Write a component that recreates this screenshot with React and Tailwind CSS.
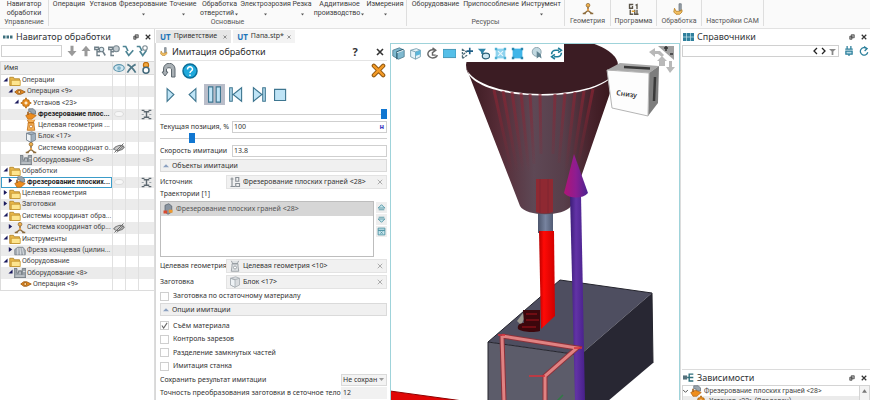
import React from "react";

const TEAL = "#2b7f9b";

function Svg({ w = 12, h, box = "0 0 16 16", children, className = "" }) {
  return (
    <svg width={w} height={h || w} viewBox={box} fill="none" className={`shrink-0 ${className}`} aria-hidden="true">
      {children}
    </svg>
  );
}

/* ---------- tree icons ---------- */
const Folder = () => (
  <Svg w={12}>
    <path d="M1 14V3h5l1 2h7v9z" fill="#e9b84a" stroke="#a87a1c" />
    <path d="M3 14V7h12v7z" fill="#fde58f" stroke="#c2922b" />
  </Svg>
);
const Op = () => (
  <Svg w={12}>
    <path d="M1 8l4-3h4l6 3-6 3H5z" fill="#e58a1f" stroke="#8c4d0c" />
    <circle cx="7" cy="8" r="2" fill="#ffd9a0" stroke="#8c4d0c" />
  </Svg>
);
const Setup = () => (
  <Svg w={12}>
    <path d="M8 1l2 3h2v2l3 2-3 2v2h-2l-2 3-2-3H4v-2L1 8l3-2V4h2z" fill="#e58a1f" stroke="#a8630f" />
    <path d="M8 6v4M6 8h4" stroke="#fff0d0" strokeWidth="2" />
  </Svg>
);
const Mill = () => (
  <Svg w={12}>
    <path d="M5 1h6l3 3v4H8V5H5z" fill="#9aa5ae" stroke="#65717b" />
    <path d="M1 10l6-3 8 3-6 5H4z" fill="#ee8d1d" stroke="#b3681a" />
    <path d="M4 5v4" stroke="#9a520b" strokeWidth="2" />
  </Svg>
);
const Target = ({ grey }) => (
  <Svg w={12}>
    <path d="M3 1l2 4h6l2-4M4 5h8v3l1 7H3l1-7z" fill={grey ? "#dfe2e4" : "#f6b35a"} stroke={grey ? "#8a9096" : "#b9660d"} />
    <circle cx="8" cy="10" r="2" fill="#fff" stroke={grey ? "#8a9096" : "#b9660d"} />
  </Svg>
);
const Block = ({ light }) => (
  <Svg w={12}>
    <path d="M2 3l7-2 5 2v9l-6 3-6-3z" fill={light ? "#d9dcdf" : "#9fb0bf"} stroke={light ? "#a1a8ae" : "#75828e"} />
    <path d="M2 3l6 2v10l-6-3z" fill="#eef2f5" stroke={light ? "#a1a8ae" : "#75828e"} />
    <path d="M2 3l6 2 6-2" stroke={light ? "#a1a8ae" : "#75828e"} />
  </Svg>
);
const Csys = () => (
  <Svg w={12}>
    <path d="M8 4v6M8 10l-5 4M8 10l5 4" stroke="#8b6a3a" strokeWidth="2" />
    <path d="M1 14h4M11 14h4" stroke="#8b6a3a" strokeWidth="2" />
    <circle cx="8" cy="3" r="2.500" fill="#f0b04c" stroke="#8b6a3a" />
    <circle cx="8" cy="9" r="1.500" fill="#f0a64c" />
  </Svg>
);
const Equip = () => (
  <Svg w={12}>
    <path d="M0 2h4v6h2V5h4v5h1V2h5v12H0z" fill="#9ba2a9" stroke="#6a727a" />
    <path d="M2 12h12M12 6h3M7 8h2" stroke="#e9ecee" />
  </Svg>
);
const Cutter = () => (
  <Svg w={12}>
    <path d="M1 13V6l4-3h7l3 4v6z" fill="#a6adb4" stroke="#737c84" />
    <path d="M5 4v9M8 4l1 9M11 4l2 9" stroke="#e8ebee" />
  </Svg>
);
const HiddenEye = () => (
  <Svg w={12} className="mx-auto">
    <path d="M1 9c3-5 11-6 14-2-3 5-11 6-14 2z" stroke="#7d7d7d" strokeWidth="1.5" fill="#c9c9c9" />
    <path d="M2 14L14 2M5 14l9-9" stroke="#6a6a6a" strokeWidth="1.3" />
  </Svg>
);
const FaintEye = () => (
  <Svg w={10} className="mx-auto">
    <ellipse cx="8" cy="8" rx="7" ry="4" stroke="#cfcfcf" fill="#f7f7f7" />
  </Svg>
);
const Beam = () => (
  <Svg w={11} className="mx-auto">
    <path d="M1 2h4M11 2h4M4 4h8M1 14h4M11 14h4M4 12h8M8 4v8" stroke="#5d6870" strokeWidth="2" />
    <path d="M1 8h3M12 8h3" stroke="#9aa3a9" strokeWidth="1.500" />
  </Svg>
);

const rows = [
  [0, "d", Folder, "Операции"],
  [1, "d", Op, "Операция <9>"],
  [2, "d", Setup, "Установ <23>"],
  [3, "", Mill, "Фрезерование плос...", "faint", true],
  [3, "", Target, "Целевая геометрия ..."],
  [3, "", Block, "Блок <17>"],
  [3, "", Csys, "Система координат о...", "hidden"],
  [2, "", Equip, "Оборудование <8>"],
  [0, "d", Folder, "Обработки"],
  [1, "r", Mill, "Фрезерование плоских...", "faint", true, true],
  [0, "r", Folder, "Целевая геометрия"],
  [0, "r", Folder, "Заготовки"],
  [0, "d", Folder, "Системы координат обра..."],
  [1, "r", Csys, "Система координат обр...", "hidden"],
  [0, "d", Folder, "Инструменты"],
  [1, "r", Cutter, "Фреза концевая (цилин..."],
  [0, "d", Folder, "Оборудование"],
  [1, "d", Equip, "Оборудование <8>"],
  [2, "", Op, "Операция <9>"],
];
const indents = ["pl-[2px]", "pl-[7px]", "pl-[13px]", "pl-[18px]"];

function Arrow({ kind }) {
  return (
    <Svg w={5} box="0 0 6 6" className="mb-[3px]">
      {kind === "d" && <path d="M5.500 .5v5h-5z" fill="#1a1a5e" />}
      {kind === "r" && <path d="M1 0l4 3-4 3z" fill="#1a1a5e" />}
    </Svg>
  );
}

function PanelButtons() {
  return (
    <div className="ml-auto flex items-center gap-[6px] pr-[3px]">
      <button aria-label="Открепить" className="flex">
        <Svg w={6} box="0 0 8 8"><path d="M3 1h4v4H3zM1 3h3v4H1z" stroke="#444" fill="#aaa" /></Svg>
      </button>
      <button aria-label="Закрыть" className="flex">
        <Svg w={6} box="0 0 8 8"><path d="M1 1l6 6M7 1L1 7" stroke="#333" strokeWidth="1.6" /></Svg>
      </button>
    </div>
  );
}

/* ---------- ribbon ---------- */
function RibbonItem({ label, second, caret, w }) {
  return (
    <button className={`flex flex-col items-center text-center whitespace-nowrap ${w}`}>
      <span>{label}</span>
      <span className="flex items-end justify-center">
        {second}
        {caret && <Svg w={5} h={3} box="0 0 5 3" className="mt-[4px] mb-[2px]"><path d="M1 .5h3L2.500 2.500z" fill="#555" /></Svg>}
      </span>
    </button>
  );
}

function RibbonGroup({ title, w, children }) {
  return (
    <section className={`flex shrink-0 flex-col justify-between border-r border-[#dedede] ${w}`}>
      <div className="flex justify-center">{children}</div>
      <div className="text-center whitespace-nowrap text-[#555]">{title}</div>
    </section>
  );
}

function Ribbon() {
  return (
    <header className="flex h-[29px] shrink-0 overflow-hidden border-b border-[#e2e2e2] bg-[#fafafa] pb-[2px] font-[Roboto,sans-serif] text-[7px] leading-[9px] text-[#3c3c3c]">
      <RibbonGroup title="Управление" w="w-[49px]">
        <RibbonItem label="Навигатор" second="обработки" w="w-[48px]" />
      </RibbonGroup>
      <RibbonGroup title="Основные" w="w-[358px]">
        <RibbonItem label="Операция" w="w-[36px]" />
        <RibbonItem label="Установ" w="w-[32px]" />
        <RibbonItem label="Фрезерование" caret w="w-[48px]" />
        <RibbonItem label="Точение" caret w="w-[32px]" />
        <RibbonItem label="Обработка" second="отверстий" caret w="w-[41px]" />
        <RibbonItem label="Электроэрозия" caret w="w-[51px]" />
        <RibbonItem label="Резка" caret w="w-[22px]" />
        <RibbonItem label="Аддитивное" second="производство" caret w="w-[53px]" />
        <RibbonItem label="Измерения" caret w="w-[38px]" />
      </RibbonGroup>
      <RibbonGroup title="Ресурсы" w="w-[158px]">
        <RibbonItem label="Оборудование" w="w-[53px]" />
        <RibbonItem label="Приспособление" w="w-[58px]" />
        <RibbonItem label="Инструмент" caret w="w-[42px]" />
      </RibbonGroup>
      <RibbonGroup title="Геометрия" w="w-[46px]">
        <button aria-label="Геометрия" className="pt-[3px]"><Csys /></button>
      </RibbonGroup>
      <RibbonGroup title="Программа" w="w-[46px]">
        <button aria-label="Программа" className="pt-[3px]">
          <Svg w={12}>
            <path d="M7 2H2v5h4V4M10 3l2-1v6M3 9v6h4M9 9v6h5M12 9v6" stroke="#5c5548" strokeWidth="1.8" />
            <path d="M5 11h4" stroke="#e0a030" strokeWidth="2" />
          </Svg>
        </button>
      </RibbonGroup>
      <RibbonGroup title="Обработка" w="w-[45px]">
        <button aria-label="Обработка" className="pt-[3px]"><ToolIcon w={12} /></button>
      </RibbonGroup>
      <RibbonGroup title="Настройки CAM" w="w-[62px]">
        <span />
      </RibbonGroup>
    </header>
  );
}

function ToolIcon({ w }) {
  return (
    <Svg w={w}>
      <path d="M8 1h3v9H8z" fill="#9aa3aa" stroke="#6a747c" />
      <path d="M2 7l2 4h5l3-2v3l-3 3H4l-3-3z" fill="#f3c064" stroke="#b27a1c" />
    </Svg>
  );
}

/* ---------- left navigator ---------- */
function Navigator() {
  const tools = [
    <path key="a" d="M6 1h4v7h4l-6 7-6-7h4z" fill="#9a9a9a" />,
    <path key="b" d="M6 15h4V8h4L8 1 2 8h4z" fill="#9a9a9a" />,
    <g key="c"><path d="M1 3h5v3H1zM4 6v8h4M4 9h4" stroke="#6f7f88" strokeWidth="1.8" /><circle cx="10" cy="6" r="3" fill="#dbe9ef" stroke="#6f7f88" strokeWidth="1.5" /><path d="M12 9l3 5" stroke="#6f7f88" strokeWidth="2" /></g>,
    <g key="d"><path d="M1 3h5v3H1zM4 6v8h4M4 9h4" stroke="#6f7f88" strokeWidth="1.8" /><circle cx="11" cy="5" r="4" fill="#c5cdd2" stroke="#7b8a92" strokeWidth="1.5" /></g>,
    <path key="e" d="M1 2h4l3 6M5 8l4 6 6-7" stroke="#4d8494" strokeWidth="2.200" />,
    <g key="f"><path d="M1 2h4l3 6M5 8l4 6 5-7" stroke="#4d8494" strokeWidth="2.200" /><circle cx="12" cy="4" r="3" stroke="#7b8a92" strokeWidth="1.5" /></g>,
  ];
  const names = ["Вниз", "Вверх", "Найти", "Настройка", "Принять", "Проверить"];
  return (
    <aside className="flex w-[155px] shrink-0 flex-col border-r border-[#dcdcdc]">
      <div className="flex h-[15px] items-center gap-[3px] pl-[3px]">
        <Svg w={10} h={6} box="0 0 20 10"><path d="M0 2h5v6H0zM7 2h5v6H7zM14 2h5v6h-5z" fill="#3d6f7d" /></Svg>
        <h2 className="text-[9px] leading-[12px] text-[#2f3337]">Навигатор обработки</h2>
        <PanelButtons />
      </div>
      <div className="flex h-[14px] items-center gap-[2px] pl-[1px]">
        <input aria-label="Поиск" className="mr-[2px] h-[12px] w-[61px] border border-[#d0d0d0] bg-white" />
        {tools.map((t, i) => (
          <button key={names[i]} aria-label={names[i]} className="flex"><Svg w={12}>{t}</Svg></button>
        ))}
      </div>
      <table className="mt-[3px] h-[229px] w-full table-fixed border-collapse border-l border-[#dcdcdc] font-[Roboto,sans-serif] text-[7px] leading-[9px] text-[#454545]">
        <colgroup>
          <col />
          <col className="w-[13px]" />
          <col className="w-[13px]" />
          <col className="w-[16px]" />
        </colgroup>
        <thead>
          <tr className="h-[13px] border-y border-[#d9d9d9] bg-[#efefef]">
            <th className="p-0 pl-[3px] text-left font-normal">Имя</th>
            <th aria-label="Видимость" className="border-l border-[#dcdcdc] p-0">
              <Svg w={12} className="mx-auto"><ellipse cx="8" cy="8" rx="7" ry="4.500" fill="#cfe6f1" stroke="#5a93aa" strokeWidth="1.5" /><circle cx="8" cy="8" r="2.500" fill="#7db3ca" /></Svg>
            </th>
            <th aria-label="Подавление" className="border-l border-[#dcdcdc] p-0">
              <Svg w={11} className="mx-auto"><path d="M2 2c6 3 9 7 12 12M14 2C8 5 5 9 2 14" stroke="#4f7888" strokeWidth="2.500" /></Svg>
            </th>
            <th aria-label="Состояние" className="border-l border-[#dcdcdc] p-0">
              <Svg w={12} className="mx-auto"><circle cx="8" cy="4" r="3.500" fill="#f5a93e" stroke="#c06d0a" strokeWidth="1.500" /><circle cx="8" cy="11" r="4" fill="#fff" stroke="#42687a" strokeWidth="2" /></Svg>
            </th>
          </tr>
        </thead>
        <tbody>
          {rows.map(([lvl, arrow, Icon, text, eye, beam, sel], i) => (
            <tr key={i} className={i % 2 ? "bg-[#ebebeb]" : "bg-white"}>
              <td className="p-0 whitespace-nowrap">
                <div className={`flex h-[11px] items-center gap-[1px] ${indents[lvl]} ${beam ? "font-bold text-[#222]" : ""} ${sel ? "bg-white shadow-[inset_0_0_0_1px_#3b9cc9]" : ""}`}>
                  <Arrow kind={arrow} />
                  <Icon />
                  <span>{text}</span>
                </div>
              </td>
              <td className="border-l border-[#e0e0e0] p-0">
                {eye === "hidden" && <HiddenEye />}
                {eye === "faint" && <FaintEye />}
              </td>
              <td className="border-l border-[#e0e0e0] p-0" />
              <td className="border-l border-[#e0e0e0] p-0">{beam && <Beam />}</td>
            </tr>
          ))}
        </tbody>
      </table>
      <div className="flex-1 border-t border-[#dcdcdc]" />
    </aside>
  );
}

/* ---------- simulation dialog ---------- */
const play = [
  ["Воспроизвести", <path key="p" d="M6 3l8 7-8 8z" />],
  ["Назад", <path key="p" d="M14 3l-8 7 8 8z" />],
  ["Пауза", <path key="p" d="M3 1h5v18H3zM12 1h5v18h-5z" />],
  ["В начало", <path key="p" d="M2 2h3v16H2zM16 2v16L6 10z" />],
  ["В конец", <path key="p" d="M15 2h3v16h-3zM4 2v16l10-8z" />],
  ["Стоп", <path key="p" d="M3 4h13v13H3z" />],
];

function Slider({ label, value }) {
  return (
    <input
      type="range"
      aria-label={label}
      defaultValue={value}
      className="block h-[10px] w-full shrink-0 appearance-none bg-transparent [&::-webkit-slider-runnable-track]:h-[1px] [&::-webkit-slider-runnable-track]:bg-[#cfcfcf] [&::-webkit-slider-thumb]:-mt-[5px] [&::-webkit-slider-thumb]:h-[10px] [&::-webkit-slider-thumb]:w-[6px] [&::-webkit-slider-thumb]:appearance-none [&::-webkit-slider-thumb]:bg-[#1177d1]"
    />
  );
}

function Section({ title }) {
  return (
    <h3 className="shrink-0">
      <button type="button" className="flex h-[13px] w-full items-center gap-[3px] border border-[#dadada] bg-[#f0f0f0] pl-[2px]">
        <Svg w={6} h={4} box="0 0 8 5"><path d="M4 0l4 4H0z" fill="#8aa0c0" /></Svg>
        {title}
      </button>
    </h3>
  );
}

function RefField({ id, label, icon, value }) {
  return (
    <div className="flex h-[14px] shrink-0 items-center">
      <label htmlFor={id} className="w-[66px] whitespace-nowrap">{label}</label>
      <div className="flex h-[14px] flex-1 items-center gap-[2px] border border-[#e3e3e3] bg-[#f1f1f1] pr-[3px] pl-[2px]">
        {icon}
        <input id={id} defaultValue={value} className="w-0 min-w-0 flex-1 bg-transparent" />
        <button type="button" aria-label="Очистить" className="flex">
          <Svg w={6} box="0 0 8 8"><path d="M1 1l6 6M7 1L1 7" stroke="#aaa" strokeWidth="1.300" /></Svg>
        </button>
      </div>
    </div>
  );
}

function Check({ label, on }) {
  return (
    <label className="flex flex-1 items-center gap-[4px]">
      <input type="checkbox" defaultChecked={on} className="peer sr-only" />
      <span className="flex size-[9px] items-center justify-center border border-[#cfcfcf] bg-white">
        {on && <Svg w={7} box="0 0 8 8"><path d="M1 4l2 3 4-6" stroke="#666" strokeWidth="1.200" /></Svg>}
      </span>
      {label}
    </label>
  );
}

function NumField({ id, label, value, children }) {
  return (
    <div className="flex h-[12px] items-center">
      <label htmlFor={id} className="w-[72px] whitespace-nowrap">{label}</label>
      <div className="flex h-[12px] flex-1 items-center border border-[#cfcfcf] pr-[2px] pl-[1px]">
        <input id={id} defaultValue={value} className="w-0 min-w-0 flex-1 bg-transparent" />
        {children}
      </div>
    </div>
  );
}

function Dialog() {
  return (
    <form className="flex w-[235px] shrink-0 flex-col overflow-hidden border-l border-[#d8d8d8] pr-[3px] pl-[4px] text-[7px] leading-[10px] text-[#333]">
      <div className="flex h-[18px] shrink-0 items-center gap-[3px] border-b border-[#e4e4e4]">
        <ToolIcon w={9} />
        <h2 className="text-[9px] leading-[12px] text-[#2c2c2c]">Имитация обработки</h2>
        <button type="button" aria-label="Справка" className="ml-auto w-[12px] text-[11px] leading-[12px] font-bold text-[#333]">?</button>
        <button type="button" aria-label="Закрыть" className="mr-[3px] ml-[12px]">
          <Svg w={8} box="0 0 8 8"><path d="M1 1l6 6M7 1L1 7" stroke="#333" strokeWidth="1.600" /></Svg>
        </button>
      </div>
      <div className="flex h-[19px] shrink-0 items-center gap-[5px] pl-[1px]">
        <button type="button" aria-label="Отменить">
          <Svg w={16}><path d="M1 9l3 4 3-4H5.500V6a3 3 0 015 0v8h3.500V6A5 5 0 002.500 6v3z" fill="#a9b0b5" stroke="#5f6970" /></Svg>
        </button>
        <button type="button" aria-label="Помощь">
          <Svg w={16}>
            <circle cx="8" cy="8" r="7" fill="#1fa9dc" stroke="#0b6e98" strokeWidth="1.500" />
            <path d="M5.500 6.500C5.500 3 10.500 3 10.500 6.300 10.500 8 8 8 8 10M8 11.500V13" stroke="#fff" strokeWidth="1.500" />
          </Svg>
        </button>
        <button type="button" aria-label="Отмена" className="ml-auto mr-[1px]">
          <Svg w={15}>
            <path d="M3 3l10 10M13 3L3 13" stroke="#8a5410" strokeWidth="4.500" strokeLinecap="round" />
            <path d="M3 3l10 10M13 3L3 13" stroke="#f39a26" strokeWidth="2.500" strokeLinecap="round" />
          </Svg>
        </button>
      </div>
      <div className="flex h-[29px] shrink-0 items-center gap-[1px]">
        {play.map(([name, p], i) => (
          <button type="button" key={name} aria-label={name} className={`flex size-[21px] items-center justify-center ${i === 2 ? "bg-[#b9bdc9]" : ""}`}>
            <Svg w={17} box="0 0 20 20"><g fill="#bfe4f6" stroke="#3e7690" strokeWidth="1.300">{p}</g></Svg>
          </button>
        ))}
      </div>
      <Slider label="Позиция" value={100} />
      <div className="mt-[2px]">
        <NumField id="pos" label="Текущая позиция, %" value="100"><span className="text-[7px] font-bold text-[#3b3bc0]">н</span></NumField>
      </div>
      <Slider label="Скорость" value={13} />
      <div className="mt-[2px] mb-[2px]">
        <NumField id="speed" label="Скорость имитации" value="13.8" />
      </div>
      <Section title="Объекты имитации" />
      <div className="mt-[3px]">
        <RefField id="src" label="Источник" value="Фрезерование плоских граней <28>" icon={
          <Svg w={12}><path d="M4 2v12M2 4h4M2 14h6M9 2h4v5H9zM9 10h5v4H9z" stroke="#8a9096" strokeWidth="1.500" /></Svg>} />
      </div>
      <div className="h-[12px] shrink-0">Траектории [1]</div>
      <div className="flex shrink-0 gap-[2px]">
        <ul className="h-[56px] flex-1 border border-[#bdbdbd] bg-white">
          <li className="flex h-[14px] items-center gap-[2px] bg-[#d6d6d6] pl-[1px] text-[#555]">
            <Svg w={12}>
              <path d="M4 3l5-2 4 3v8l-5 3-4-3z" fill="#8994a0" stroke="#58626c" />
              <path d="M2 10h5v4H2z" fill="#d94a30" /><path d="M9 9h5v4H9z" fill="#ef9a2e" />
            </Svg>
            Фрезерование плоских граней &lt;28&gt;
          </li>
        </ul>
        <div className="flex flex-col gap-[1px] pt-[1px]">
          {[
            ["Выше", "M2 9l6-6 6 6zM3 12h10"],
            ["Ниже", "M3 4h10M2 7h12l-6 6z"],
            ["Удалить", "M2 2h12v4H2zM2 6h12v8H2zM6 8l4 4M10 8l-4 4"],
          ].map(([n, d]) => (
            <button type="button" key={n} aria-label={n} className="flex size-[11px] items-center justify-center bg-[#eeeeee]">
              <Svg w={9}><path d={d} stroke="#4e94a4" fill="#c8e5ec" strokeWidth="1.600" /></Svg>
            </button>
          ))}
        </div>
      </div>
      <div className="mt-[2px] flex flex-col gap-[2px]">
        <RefField id="target" label="Целевая геометрия" value="Целевая геометрия <10>" icon={<Target grey />} />
        <RefField id="blank" label="Заготовка" value="Блок <17>" icon={<Block light />} />
      </div>
      <div className="flex h-[14px] shrink-0"><Check label="Заготовка по остаточному материалу" /></div>
      <Section title="Опции имитации" />
      <div className="mt-[3px] flex h-[54px] shrink-0 flex-col">
        <Check label="Съём материала" on />
        <Check label="Контроль зарезов" />
        <Check label="Разделение замкнутых частей" />
        <Check label="Имитация станка" />
      </div>
      <div className="flex h-[13px] shrink-0 items-center justify-between">
        <label htmlFor="save">Сохранить результат имитации</label>
        <span className="flex h-[12px] w-[46px] items-center border border-[#dadada] bg-[#f3f3f3]">
          <select id="save" className="w-[38px] appearance-none bg-transparent pl-[1px]"><option>Не сохран</option></select>
          <Svg w={5} h={3} box="0 0 5 3" className="mr-[2px] ml-auto"><path d="M0 0h5L2.500 3z" fill="#999" /></Svg>
        </span>
      </div>
      <div className="flex h-[13px] shrink-0 items-center justify-between">
        <label htmlFor="acc" className="whitespace-nowrap">Точность преобразования заготовки в сеточное тело</label>
        <input id="acc" defaultValue="12" className="h-[12px] w-[46px] shrink-0 bg-[#f1f1f1] pl-[2px]" />
      </div>
    </form>
  );
}

/* ---------- 3D viewport ---------- */
const viewTools = [
  ["Плоскость", "ml-[1px]", <g key="g"><path d="M1 4l8-3 6 3v8l-7 3-7-4z" fill="#7fb9cf" stroke="#4d7a8c" /><path d="M6 15V6l8-3" stroke="#28576b" strokeWidth="1.500" /><path d="M6 7l8-3" stroke="#fff" /></g>],
  ["Куб", "", <g key="g"><path d="M2 4l7-2 5 2v8l-6 3-6-3z" fill="#e4f3f9" stroke="#6d98a9" /><path d="M2 4l6 2 6-2M8 6v9" stroke="#6d98a9" /><path d="M8 6l6-2v5l-6 2z" fill="#5bb6da" /></g>],
  ["Поворот", "", <path key="g" d="M11 4a6 5 0 103 6M8 6v4h4M8 1l4 3-4 3" stroke="#666" strokeWidth="1.800" />],
  ["Рамка", "", <path key="g" d="M0 3h16v10H0z" fill="#55bfe8" stroke="#3588aa" />],
  ["Точки", "", <g key="g"><path d="M3 2v12M3 3l5 3-5 4M3 14l6-4" stroke="#4d6b78" strokeWidth="1.600" strokeDasharray="3 1" /><path d="M12 1v8M8 5h8" stroke="#1f5f87" strokeWidth="2" /></g>],
  ["Фильтр", "", <g key="g"><path d="M1 2h10L8 6v4L5 8V6z" fill="#2f85a8" /><ellipse cx="11" cy="11" rx="4.500" ry="3.500" fill="#cde7f1" stroke="#2c6178" strokeWidth="1.500" /></g>],
  ["Сетка", "", <g key="g"><path d="M2 2h12v12H2z" fill="#8fd3ee" /><path d="M1 1h3v3H1zM12 1h3v3h-3zM1 12h3v3H1zM12 12h3v3h-3z" fill="#4dafd2" /><path d="M5 5l6 6M11 5l-6 6" stroke="#e6f6fc" strokeWidth="1.500" /></g>],
  ["Оболочка", "", <g key="g"><path d="M2 2h12v12H2z" fill="#3fb5e8" /><path d="M1 1h3v3H1zM12 1h3v3h-3zM1 12h3v3H1zM12 12h3v3h-3z" fill="#2a86ad" /></g>],
  ["Выбор", "ml-[3px]", <g key="g"><circle cx="7" cy="6" r="5.500" fill="#c2d9e1" stroke="#7e98a2" /><path d="M7 5v9l3-2 3 2-1-5z" fill="#5f8290" /></g>],
  ["Обновить", "ml-[2px]", <path key="g" d="M2 9a5 5 0 015-5h4M10 1l4 3-4 3M14 7a5 5 0 01-5 5H5M6 9l-4 3 4 3" stroke="#1f7d99" strokeWidth="2" />],
];

function Viewport() {
  return (
    <main className="relative min-w-0 flex-1 overflow-hidden border border-b-0 border-[#9fd3da] bg-white">
      <svg className="absolute -top-px -left-px" width="288" height="358" viewBox="0 0 288 358" role="img" aria-label="Модель">
        <defs>
          <linearGradient id="cone" x1="0" x2="1" y1="0" y2="0">
            <stop offset="0" stopColor="#3a1a20" />
            <stop offset=".22" stopColor="#562c37" />
            <stop offset=".45" stopColor="#5e4855" />
            <stop offset=".65" stopColor="#573e4a" />
            <stop offset=".82" stopColor="#48232c" />
            <stop offset="1" stopColor="#351419" />
          </linearGradient>
          <linearGradient id="tip" x1="0" x2="1" y1="0" y2="0">
            <stop offset="0" stopColor="#b01575" />
            <stop offset=".5" stopColor="#8d1d92" />
            <stop offset="1" stopColor="#4a2490" />
          </linearGradient>
          <linearGradient id="shaft" x1="0" x2="1" y1="0" y2="0">
            <stop offset="0" stopColor="#3b1d78" />
            <stop offset=".4" stopColor="#6233a6" />
            <stop offset="1" stopColor="#47208a" />
          </linearGradient>
          <linearGradient id="red" x1="0" x2="1" y1="0" y2="0">
            <stop offset="0" stopColor="#b80000" />
            <stop offset=".3" stopColor="#ff0a06" />
            <stop offset="1" stopColor="#d00000" />
          </linearGradient>
          <linearGradient id="steel" x1="0" x2="1" y1="0" y2="0">
            <stop offset="0" stopColor="#4c556c" />
            <stop offset=".5" stopColor="#77839f" />
            <stop offset="1" stopColor="#515b74" />
          </linearGradient>
          <linearGradient id="streak" gradientUnits="userSpaceOnUse" x1="0" x2="0" y1="48" y2="130">
            <stop offset="0" stopColor="#8a2534" stopOpacity=".7" />
            <stop offset="1" stopColor="#8a2534" stopOpacity="0" />
          </linearGradient>
        </defs>
        <path d="M98 299L170 237 262 250 190 312z" fill="#4e4e60" />
        <path d="M98 299L190 312V358H98z" fill="#5c5c6a" />
        <path d="M190 312L262 250 263 320 218 358H190z" fill="#282733" />
        <path d="M98 299L190 312M98 358V299L170 237 262 250 263 320" stroke="#24242d" fill="none" />
        <path d="M127 278l6-8 2 4-4 8z" fill="#9c9a91" />
        <path d="M133 267H150V288C143 290 132 289 128 286 127 282 130 280 134 280z" fill="#3c070c" />
        <path d="M136 271h11M136 277h13M132 284h14" stroke="#700c13" strokeWidth="2" />
        <path d="M148 168H163V190H148z" fill="url(#steel)" />
        <path d="M149 188H164L165 273 151 286z" fill="url(#red)" />
        <path d="M76 24C80 62 222 62 227 24L220 50 181 163C174 174 136 174 130 163z" fill="url(#cone)" />
        <path d="M104 47l18 83M113 48l16 90M122 49l12 86M131 50l8 80M140 51l4 70M150 51l1 60M165 51l-2 60M175 50l-6 70M185 49l-9 80M194 48l-12 80M203 46l-16 80" stroke="url(#streak)" strokeWidth="3" />
        <path d="M146 136H163V169Q154 172 146 169z" fill="#8f2932" />
        <path d="M150 136V170M158 136V170" stroke="#7f2731" strokeWidth="1" />
        <ellipse cx="152" cy="22" rx="76" ry="29" fill="#3b1c23" />
        <path d="M180 152H191L195 358H185z" fill="url(#shaft)" />
        <path d="M184 111L198 150C193 156 179 156 174 150z" fill="url(#tip)" />
        <path d="M112 293L187 305 155 333V358M112 293L114 358" stroke="#8d323b" strokeWidth="5" fill="none" />
        <path d="M112 293L187 305 155 333V358M112 293L114 358" stroke="#e08282" strokeWidth="3" fill="none" />
        <path d="M139 333H155M108 292h7M184 305h8" stroke="#d9303a" strokeWidth="1.500" />
        <path d="M167 358l6-6" stroke="#317a45" strokeWidth="1.500" />
        <path d="M0 348L73 358H0z" fill="#e00606" />
        <path d="M0 348L73 358" stroke="#8e0000" />
        {/* orientation cube */}
        <path d="M217 27L230 20 269 23 259 30z" fill="#a9a9a9" />
        <path d="M259 30L269 23 268 60 258 73z" fill="#7d7d7d" />
        <path d="M217 27L259 30 258 73 222 65z" fill="#fdfdfd" stroke="#b5b5b5" />
        <path d="M234 24l26 1.500M265 34l-1 24" stroke="#3a3a3a" strokeWidth="2.500" />
        <text x="226" y="52" transform="rotate(8 226 52)" fontSize="7" fontFamily="Noto Sans, sans-serif" fontWeight="600" fill="#333">Снизу</text>
        <path d="M259 9l6-4v3h5l4 4-2 2-4-3h-3v3zM272 13l5 5h-2v5h-6v-5h-2zM279 18h3v6h3l-5 6-4-6h3z" fill="#b9b9b9" />
        <path d="M268 3H284V17z" fill="#a0a0a0" />
        <path d="M274 5h4M276 3v5M280 11h3" stroke="#333" strokeWidth="1.500" />
      </svg>
      <div className="relative flex h-[18px] w-[173px] items-center gap-[4px] bg-white">
        {viewTools.map(([n, m, d]) => (
          <button key={n} aria-label={n} className={`flex ${m}`}><Svg w={13}>{d}</Svg></button>
        ))}
      </div>
    </main>
  );
}

/* ---------- right column ---------- */
function RightColumn() {
  return (
    <aside className="flex w-[190px] shrink-0 flex-col border-l border-[#dcdcdc] pl-[1px]">
      <div className="flex h-[15px] shrink-0 items-center gap-[3px] pl-[1px]">
        <Svg w={11} h={8} box="0 0 22 16"><path d="M0 0h22v16H0z" fill="#2f7f9c" /><path d="M7 0v16M15 0v16M0 8h22" stroke="#bfe0ea" strokeWidth="1.500" /></Svg>
        <h2 className="text-[9px] leading-[12px] text-[#2f3337]">Справочники</h2>
        <PanelButtons />
      </div>
      <div className="flex h-[14px] shrink-0 items-center gap-[5px] pr-[1px]">
        <div className="flex h-[12px] flex-1 items-center gap-[3px] border border-[#d0d0d0] pr-[2px]">
          <input aria-label="Поиск в справочниках" className="w-0 min-w-0 flex-1" />
          <button aria-label="Назад"><Svg w={5} h={8} box="0 0 5 8"><path d="M4 1L1 4l3 3" stroke="#222" strokeWidth="1.300" /></Svg></button>
          <button aria-label="Вперёд"><Svg w={5} h={8} box="0 0 5 8"><path d="M1 1l3 3-3 3" stroke="#222" strokeWidth="1.300" /></Svg></button>
          <button aria-label="Фильтр"><Svg w={7} box="0 0 8 8"><path d="M0 1h8L5 4v4H3V4z" fill="#888" /></Svg></button>
        </div>
        <button aria-label="База"><Svg w={10}><path d="M5 0v4M11 0v4M2 5h12M3 8h10v5H3zM8 13v3" stroke={TEAL} strokeWidth="2" fill="#b7dbe6" /></Svg></button>
        <button aria-label="Обновить"><Svg w={10}><path d="M12 4a6 6 0 102 6M8 1l5 3-4 4" stroke={TEAL} strokeWidth="2" /></Svg></button>
      </div>
      <div className="flex-1" />
      <section className="h-[31px] shrink-0 overflow-hidden border-t border-[#dcdcdc]">
        <div className="flex h-[15px] items-center gap-[3px] pl-[1px]">
          <Svg w={11}><path d="M0 5h6v6H0z" fill="#56717c" /><path d="M6 8h3M15 3H9v10h6M9 8h6" stroke="#2f6f7c" strokeWidth="2" /></Svg>
          <h2 className="text-[9px] leading-[12px] text-[#2f3337]">Зависимости</h2>
          <PanelButtons />
        </div>
        <div className="flex border border-[#d4d4d4] font-[Roboto,sans-serif] text-[7px] leading-[10px] text-[#444]">
          <ul className="flex-1">
            <li className="flex h-[10px] items-center gap-[2px]">
              <Svg w={5} box="0 0 6 6"><path d="M0 1l3 3 3-3" stroke="#333" /></Svg>
              <Mill />Фрезерование плоских граней &lt;28&gt;
            </li>
            <li className="flex h-[10px] items-center gap-[2px] bg-[#ebebeb] pl-[12px]"><Setup />Установ &lt;23&gt; (Владелец)</li>
          </ul>
          <button aria-label="Прокрутить вверх" className="flex w-[10px] justify-center border-l border-[#d4d4d4] bg-[#f3f3f3] pt-[3px]">
            <Svg w={5} h={4} box="0 0 6 4"><path d="M0 4l3-4 3 4z" fill="#777" /></Svg>
          </button>
        </div>
      </section>
    </aside>
  );
}

function Tab({ label, active }) {
  return (
    <div className={`flex h-[13px] items-center gap-[3px] px-[4px] ${active ? "bg-[#f3f3f3]" : "bg-[#e6e6e6]"}`}>
      <span className="text-[8px] font-bold text-[#1d74b8]">UT</span>
      <button className="text-[7px]">{label}</button>
      <button aria-label="Закрыть вкладку" className={`flex ${active ? "" : "ml-[3px]"}`}><Svg w={4} box="0 0 8 8"><path d="M1 1l6 6M7 1L1 7" stroke="#777" strokeWidth="1.600" /></Svg></button>
    </div>
  );
}

export default function App() {
  return (
    <div className="flex h-screen flex-col overflow-hidden bg-white font-['Noto_Sans',sans-serif]">
      <Ribbon />
      <div className="flex min-h-0 flex-1">
        <Navigator />
        <div className="flex min-w-0 flex-1 flex-col">
          <nav className="flex h-[14px] shrink-0 items-end gap-[2px] pl-[1px] text-[#333]">
            <Tab label="Приветствие" />
            <Tab label="Папа.stp*" active />
          </nav>
          <div className="flex min-h-0 flex-1">
            <Dialog />
            <Viewport />
          </div>
        </div>
        <RightColumn />
      </div>
    </div>
  );
}
